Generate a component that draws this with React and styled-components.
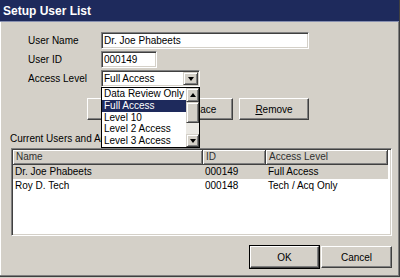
import React from "react";
import styled, { createGlobalStyle } from "styled-components";

const GlobalStyle = createGlobalStyle`
  html, body {
    margin: 0;
    padding: 0;
    background: #d4d0c8;
  }
  body {
    font-family: "Liberation Sans", Arial, sans-serif;
    font-size: 10px;
    color: #000;
  }
`;

const Window = styled.div`
  width: 400px;
  height: 277px;
  box-sizing: border-box;
  background: #d4d0c8;
  border-right: 1px solid #404040;
  border-bottom: 1px solid #404040;
  box-shadow: inset -1px -1px #808080, inset 1px 1px #fff;
  display: flex;
  flex-direction: column;
`;

const TitleBar = styled.div`
  height: 21px;
  background: #1e2a5c;
  color: #fff;
  font-weight: bold;
  font-size: 12px;
  display: flex;
  align-items: center;
  padding-left: 3px;
  border-bottom: 1px solid #8890b0;
`;

const Body = styled.div`
  display: flex;
  flex-direction: column;
  padding: 10px 5px 0 11px;
`;

const Form = styled.div`
  display: grid;
  grid-template-columns: 73px auto;
  grid-auto-rows: 17px;
  row-gap: 2px;
  margin-left: 17px;
  align-items: center;
`;

const Label = styled.span`
  line-height: 17px;
`;

const TextBox = styled.div`
  box-sizing: border-box;
  width: ${(p) => p.width}px;
  height: 17px;
  background: #fff;
  border: 1px solid;
  border-color: #808080 #fff #fff #808080;
  box-shadow: inset 1px 1px #404040, inset -1px -1px #d4d0c8;
  padding: 0 2px;
  line-height: 15px;
  white-space: nowrap;
`;

const SelectWrap = styled.div`
  position: relative;
  width: 99px;
`;

const SelectBox = styled(TextBox)`
  display: flex;
  align-items: center;
  justify-content: space-between;
  padding: 1px 1px 1px 2px;
`;

const ArrowButton = styled.div`
  box-sizing: border-box;
  width: ${(p) => p.width || 15}px;
  height: ${(p) => p.height || 13}px;
  background: #d4d0c8;
  border: 1px solid;
  border-color: #d4d0c8 #404040 #404040 #d4d0c8;
  box-shadow: inset 1px 1px #fff, inset -1px -1px #808080;
  display: flex;
  align-items: center;
  justify-content: center;
  flex-shrink: 0;
`;

const Triangle = styled.span`
  width: 0;
  height: 0;
  border-left: 3.5px solid transparent;
  border-right: 3.5px solid transparent;
  ${(p) =>
    p.up
      ? "border-bottom: 4px solid #000;"
      : "border-top: 4px solid #000;"}
`;

const DropList = styled.div`
  position: absolute;
  top: 17px;
  left: 0;
  width: 99px;
  height: 61px;
  box-sizing: border-box;
  background: #fff;
  border: 1px solid #000;
  display: flex;
  z-index: 5;
`;

const Options = styled.div`
  flex: 1;
  display: flex;
  flex-direction: column;
`;

const Option = styled.div`
  height: 12px;
  line-height: 12px;
  padding-left: 2px;
  white-space: nowrap;
  overflow: hidden;
  background: ${(p) => (p.active ? "#1e2a5c" : "transparent")};
  color: ${(p) => (p.active ? "#fff" : "#000")};
`;

const ScrollBar = styled.div`
  width: 13px;
  display: flex;
  flex-direction: column;
  background: #ebe9e4;
`;

const Track = styled.div`
  flex: 1;
`;

const ButtonRow = styled.div`
  display: flex;
  gap: 6px;
  margin: 11px 0 0 76px;
`;

const Button = styled.button`
  box-sizing: border-box;
  width: ${(p) => p.width || 70}px;
  height: 22px;
  font-family: "Liberation Sans", Arial, sans-serif;
  font-size: 10px;
  color: #000;
  background: #d4d0c8;
  border: 1px solid;
  border-color: #fff #404040 #404040 #fff;
  box-shadow: ${(p) =>
    p.primary
      ? "0 0 0 1px #000, inset -1px -1px #808080"
      : "inset -1px -1px #808080, inset 1px 1px #d4d0c8"};
  padding: 0;
`;

const SectionLabel = styled.div`
  margin: 12px 0 0 -1px;
  line-height: 14px;
`;

const ListView = styled.div`
  margin-top: 2px;
  width: 381px;
  height: 88px;
  box-sizing: border-box;
  background: #fff;
  border: 1px solid;
  border-color: #808080 #fff #fff #808080;
  box-shadow: inset 1px 1px #404040, inset -1px -1px #d4d0c8;
  padding: 1px 3px 0 1px;
`;

const Header = styled.div`
  display: grid;
  grid-template-columns: 190px 63px 1fr;
  height: 15px;
`;

const HeaderCell = styled.div`
  box-sizing: border-box;
  background: #d4d0c8;
  border-right: 1px solid #404040;
  border-bottom: 1px solid #404040;
  box-shadow: inset 1px 1px #fff, inset -1px -1px #808080;
  padding-left: 3px;
  line-height: 14px;
  color: #303030;
`;

const Row = styled.div`
  display: grid;
  grid-template-columns: 190px 63px 1fr;
  height: 14px;
  line-height: 14px;
  background: ${(p) => (p.selected ? "#d4d0c8" : "transparent")};
`;

const Cell = styled.div`
  padding-left: 2px;
  white-space: nowrap;
`;

const Footer = styled.div`
  display: flex;
  justify-content: flex-end;
  gap: 2px;
  margin: 10px 2px 0 0;
`;

const Underline = styled.span`
  text-decoration: underline;
`;

const users = [
  { name: "Dr. Joe Phabeets", id: "000149", level: "Full Access" },
  { name: "Roy D. Tech", id: "000148", level: "Tech / Acq Only" },
];

const levels = [
  "Data Review Only",
  "Full Access",
  "Level 10",
  "Level 2 Access",
  "Level 3 Access",
];

export default function App() {
  return (
    <>
      <GlobalStyle />
      <Window>
        <TitleBar>Setup User List</TitleBar>
        <Body>
          <Form>
            <Label>User Name</Label>
            <TextBox width={208}>Dr. Joe Phabeets</TextBox>
            <Label>User ID</Label>
            <TextBox width={56}>000149</TextBox>
            <Label>Access Level</Label>
            <SelectWrap>
              <SelectBox width={99}>
                <span>Full Access</span>
                <ArrowButton>
                  <Triangle />
                </ArrowButton>
              </SelectBox>
              <DropList>
                <Options>
                  {levels.map((l) => (
                    <Option key={l} active={l === "Full Access"}>
                      {l}
                    </Option>
                  ))}
                </Options>
                <ScrollBar>
                  <ArrowButton width={13} height={14}>
                    <Triangle up />
                  </ArrowButton>
                  <ArrowButton width={13} height={21} />
                  <Track />
                  <ArrowButton width={13} height={13}>
                    <Triangle />
                  </ArrowButton>
                </ScrollBar>
              </DropList>
            </SelectWrap>
          </Form>

          <ButtonRow>
            <Button>
              <Underline>A</Underline>dd
            </Button>
            <Button>
              Re<Underline>p</Underline>lace
            </Button>
            <Button>
              <Underline>R</Underline>emove
            </Button>
          </ButtonRow>

          <SectionLabel>Current Users and Access Levels</SectionLabel>
          <ListView>
            <Header>
              <HeaderCell>Name</HeaderCell>
              <HeaderCell>ID</HeaderCell>
              <HeaderCell>Access Level</HeaderCell>
            </Header>
            {users.map((u, i) => (
              <Row key={u.id} selected={i === 0}>
                <Cell>{u.name}</Cell>
                <Cell>{u.id}</Cell>
                <Cell>{u.level}</Cell>
              </Row>
            ))}
          </ListView>

          <Footer>
            <Button primary width={69}>
              OK
            </Button>
            <Button width={71}>Cancel</Button>
          </Footer>
        </Body>
      </Window>
    </>
  );
}
